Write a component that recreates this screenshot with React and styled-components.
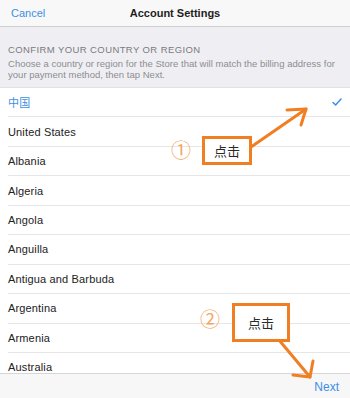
import React from "react";
import styled, { createGlobalStyle } from "styled-components";

const Global = createGlobalStyle`
  html, body { margin: 0; padding: 0; background: #fff; }
  body { font-family: "Liberation Sans", Arial, sans-serif; }
  * { box-sizing: border-box; }
`;

const Screen = styled.div`
  position: relative;
  width: 350px;
  height: 398px;
  display: flex;
  flex-direction: column;
  overflow: hidden;
  background: #fff;
`;

const NavBar = styled.div`
  height: 27px;
  flex: none;
  display: grid;
  grid-template-columns: 1fr auto 1fr;
  align-items: center;
  padding: 0 11px;
  background: #f8f8f8;
  border-bottom: 1px solid #cfcfd2;
`;

const NavButton = styled.span`
  font-size: 11px;
  color: #3d8fe6;
  justify-self: ${(p) => (p.$right ? "end" : "start")};
`;

const NavTitle = styled.span`
  font-size: 11px;
  font-weight: bold;
  color: #1e1e1e;
`;

const Intro = styled.div`
  height: 61px;
  flex: none;
  padding: 17px 8px 0;
  background: #efeff3;
  border-bottom: 1px solid #e2e2e6;
`;

const IntroHeading = styled.div`
  font-size: 9.5px;
  line-height: 12px;
  letter-spacing: 0.4px;
  color: #7a7a7e;
`;

const IntroText = styled.div`
  margin-top: 1.5px;
  font-size: 9.5px;
  line-height: 11.5px;
  letter-spacing: 0.02px;
  color: #8d8d91;
`;

const List = styled.div`
  flex: 1;
  overflow: hidden;
`;

const Row = styled.div`
  height: 29.45px;
  margin-left: 8px;
  padding-right: 8px;
  display: flex;
  align-items: center;
  justify-content: space-between;
  border-bottom: 1px solid #e6e6e8;
  font-size: 11px;
  letter-spacing: 0.15px;
  color: ${(p) => (p.$selected ? "#3d8fe6" : "#222")};
  font-family: "Liberation Sans", "Noto Sans CJK SC", sans-serif;
`;

const Toolbar = styled.div`
  height: 25px;
  flex: none;
  display: flex;
  align-items: center;
  justify-content: flex-end;
  padding: 2px 11px 0;
  background: #f7f7f7;
  border-top: 1px solid #d6d6d9;
`;

const ToolbarButton = styled.span`
  font-size: 12px;
  color: #3d8fe6;
`;

const Callout = styled.div`
  position: absolute;
  left: ${(p) => p.$x}px;
  top: ${(p) => p.$y}px;
  width: ${(p) => p.$w}px;
  height: ${(p) => p.$h}px;
  border: 3px solid #f07e23;
  background: #fff;
  display: flex;
  align-items: center;
  justify-content: center;
  font-family: "Noto Sans CJK SC", sans-serif;
  font-size: 13px;
  color: #2a2a2a;
`;

const StepNumber = styled.span`
  position: absolute;
  left: ${(p) => p.$x}px;
  top: ${(p) => p.$y}px;
  font-family: "Noto Sans CJK SC", sans-serif;
  font-size: 20px;
  line-height: 1;
  color: #f4a460;
`;

const ArrowLayer = styled.svg`
  position: absolute;
  left: 0;
  top: 0;
  pointer-events: none;
`;

const countries = [
  "中国",
  "United States",
  "Albania",
  "Algeria",
  "Angola",
  "Anguilla",
  "Antigua and Barbuda",
  "Argentina",
  "Armenia",
  "Australia",
];

function Check() {
  return (
    <svg width="10" height="8" viewBox="0 0 10 8">
      <polyline
        points="1,4.5 3.6,7 9,1"
        fill="none"
        stroke="#3d8fe6"
        strokeWidth="1.5"
        strokeLinecap="round"
        strokeLinejoin="round"
      />
    </svg>
  );
}

export default function App() {
  return (
    <>
      <Global />
      <Screen>
        <NavBar>
          <NavButton>Cancel</NavButton>
          <NavTitle>Account Settings</NavTitle>
          <span />
        </NavBar>
        <Intro>
          <IntroHeading>CONFIRM YOUR COUNTRY OR REGION</IntroHeading>
          <IntroText>
            Choose a country or region for the Store that will match the billing address for
            your payment method, then tap Next.
          </IntroText>
        </Intro>
        <List>
          {countries.map((c, i) => (
            <Row key={c} $selected={i === 0}>
              <span>{c}</span>
              {i === 0 && <Check />}
            </Row>
          ))}
        </List>
        <Toolbar>
          <ToolbarButton>Next</ToolbarButton>
        </Toolbar>

        <ArrowLayer width="350" height="398" viewBox="0 0 350 398">
          <g fill="none" stroke="#f07e23" strokeWidth="3" strokeLinecap="round" strokeLinejoin="round">
            <line x1="251" y1="147" x2="306" y2="109" />
            <polyline points="287,110 306,109 301,125" />
            <line x1="279" y1="340" x2="310" y2="377" />
            <polyline points="293,375 310,377 313,361" />
          </g>
        </ArrowLayer>
        <StepNumber $x={171} $y={140}>①</StepNumber>
        <Callout $x={202} $y={136} $w={50} $h={29}>点击</Callout>
        <StepNumber $x={200} $y={309}>②</StepNumber>
        <Callout $x={232} $y={303} $w={58} $h={39}>点击</Callout>
      </Screen>
    </>
  );
}
